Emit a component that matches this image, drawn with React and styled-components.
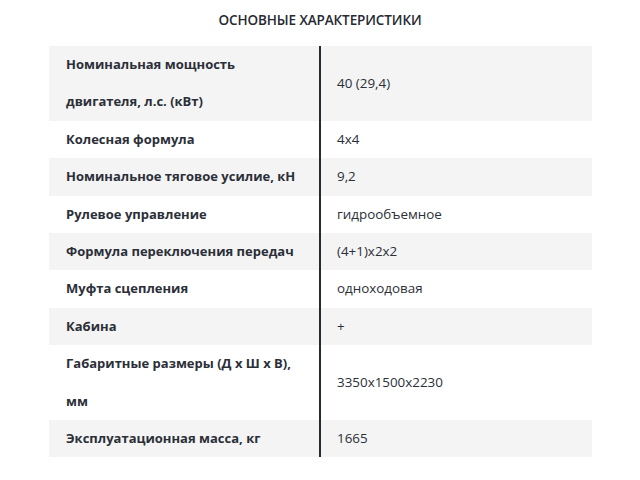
import React from "react"
import styled, { createGlobalStyle } from "styled-components"

const specs = [
  { label: "Номинальная мощность двигателя, л.с. (кВт)", value: "40 (29,4)" },
  { label: "Колесная формула", value: "4x4" },
  { label: "Номинальное тяговое усилие, кН", value: "9,2" },
  { label: "Рулевое управление", value: "гидрообъемное" },
  { label: "Формула переключения передач", value: "(4+1)x2x2" },
  { label: "Муфта сцепления", value: "одноходовая" },
  { label: "Кабина", value: "+" },
  { label: "Габаритные размеры (Д х Ш х В), мм", value: "3350x1500x2230" },
  { label: "Эксплуатационная масса, кг", value: "1665" },
]

function App() {
  return (
    <>
      <GlobalStyle />
      <Wrapper>
        <Title>Основные характеристики</Title>
        <Table>
          {specs.map((row, i) => (
            <Row key={row.label} shaded={i % 2 === 0}>
              <Label>{row.label}</Label>
              <Value>{row.value}</Value>
            </Row>
          ))}
        </Table>
      </Wrapper>
    </>
  )
}

export default App

const GlobalStyle = createGlobalStyle`
  body {
    margin: 0;
    background: #ffffff;
    font-family: "Open Sans", "Liberation Sans", sans-serif;
    color: #2b2f38;
  }
`

const Wrapper = styled.div`
  width: 640px;
  height: 480px;
  overflow: hidden;
  padding-top: 10px;
  box-sizing: border-box;
`

const Title = styled.h2`
  margin: 0 0 16px;
  text-align: center;
  text-transform: uppercase;
  font-size: 13.5px;
  line-height: 20px;
  font-weight: 600;
  letter-spacing: -0.1px;
  color: #262a33;
`

const Table = styled.div`
  width: 543px;
  margin-left: 49px;
  display: grid;
`

const Row = styled.div.withConfig({
  shouldForwardProp: (prop) => prop !== "shaded",
})`
  display: grid;
  grid-template-columns: 272px 1fr;
  align-items: stretch;
  background: ${(p) => (p.shaded ? "#f4f4f4" : "#ffffff")};
`

const Label = styled.div`
  padding: 0 6px 0 17px;
  border-right: 2px solid #262a33;
  font-size: 13px;
  font-weight: 700;
  line-height: 37.4px;
`

const Value = styled.div`
  display: flex;
  align-items: center;
  padding-left: 16px;
  font-size: 13.4px;
  font-weight: 400;
  line-height: 37.4px;
`
